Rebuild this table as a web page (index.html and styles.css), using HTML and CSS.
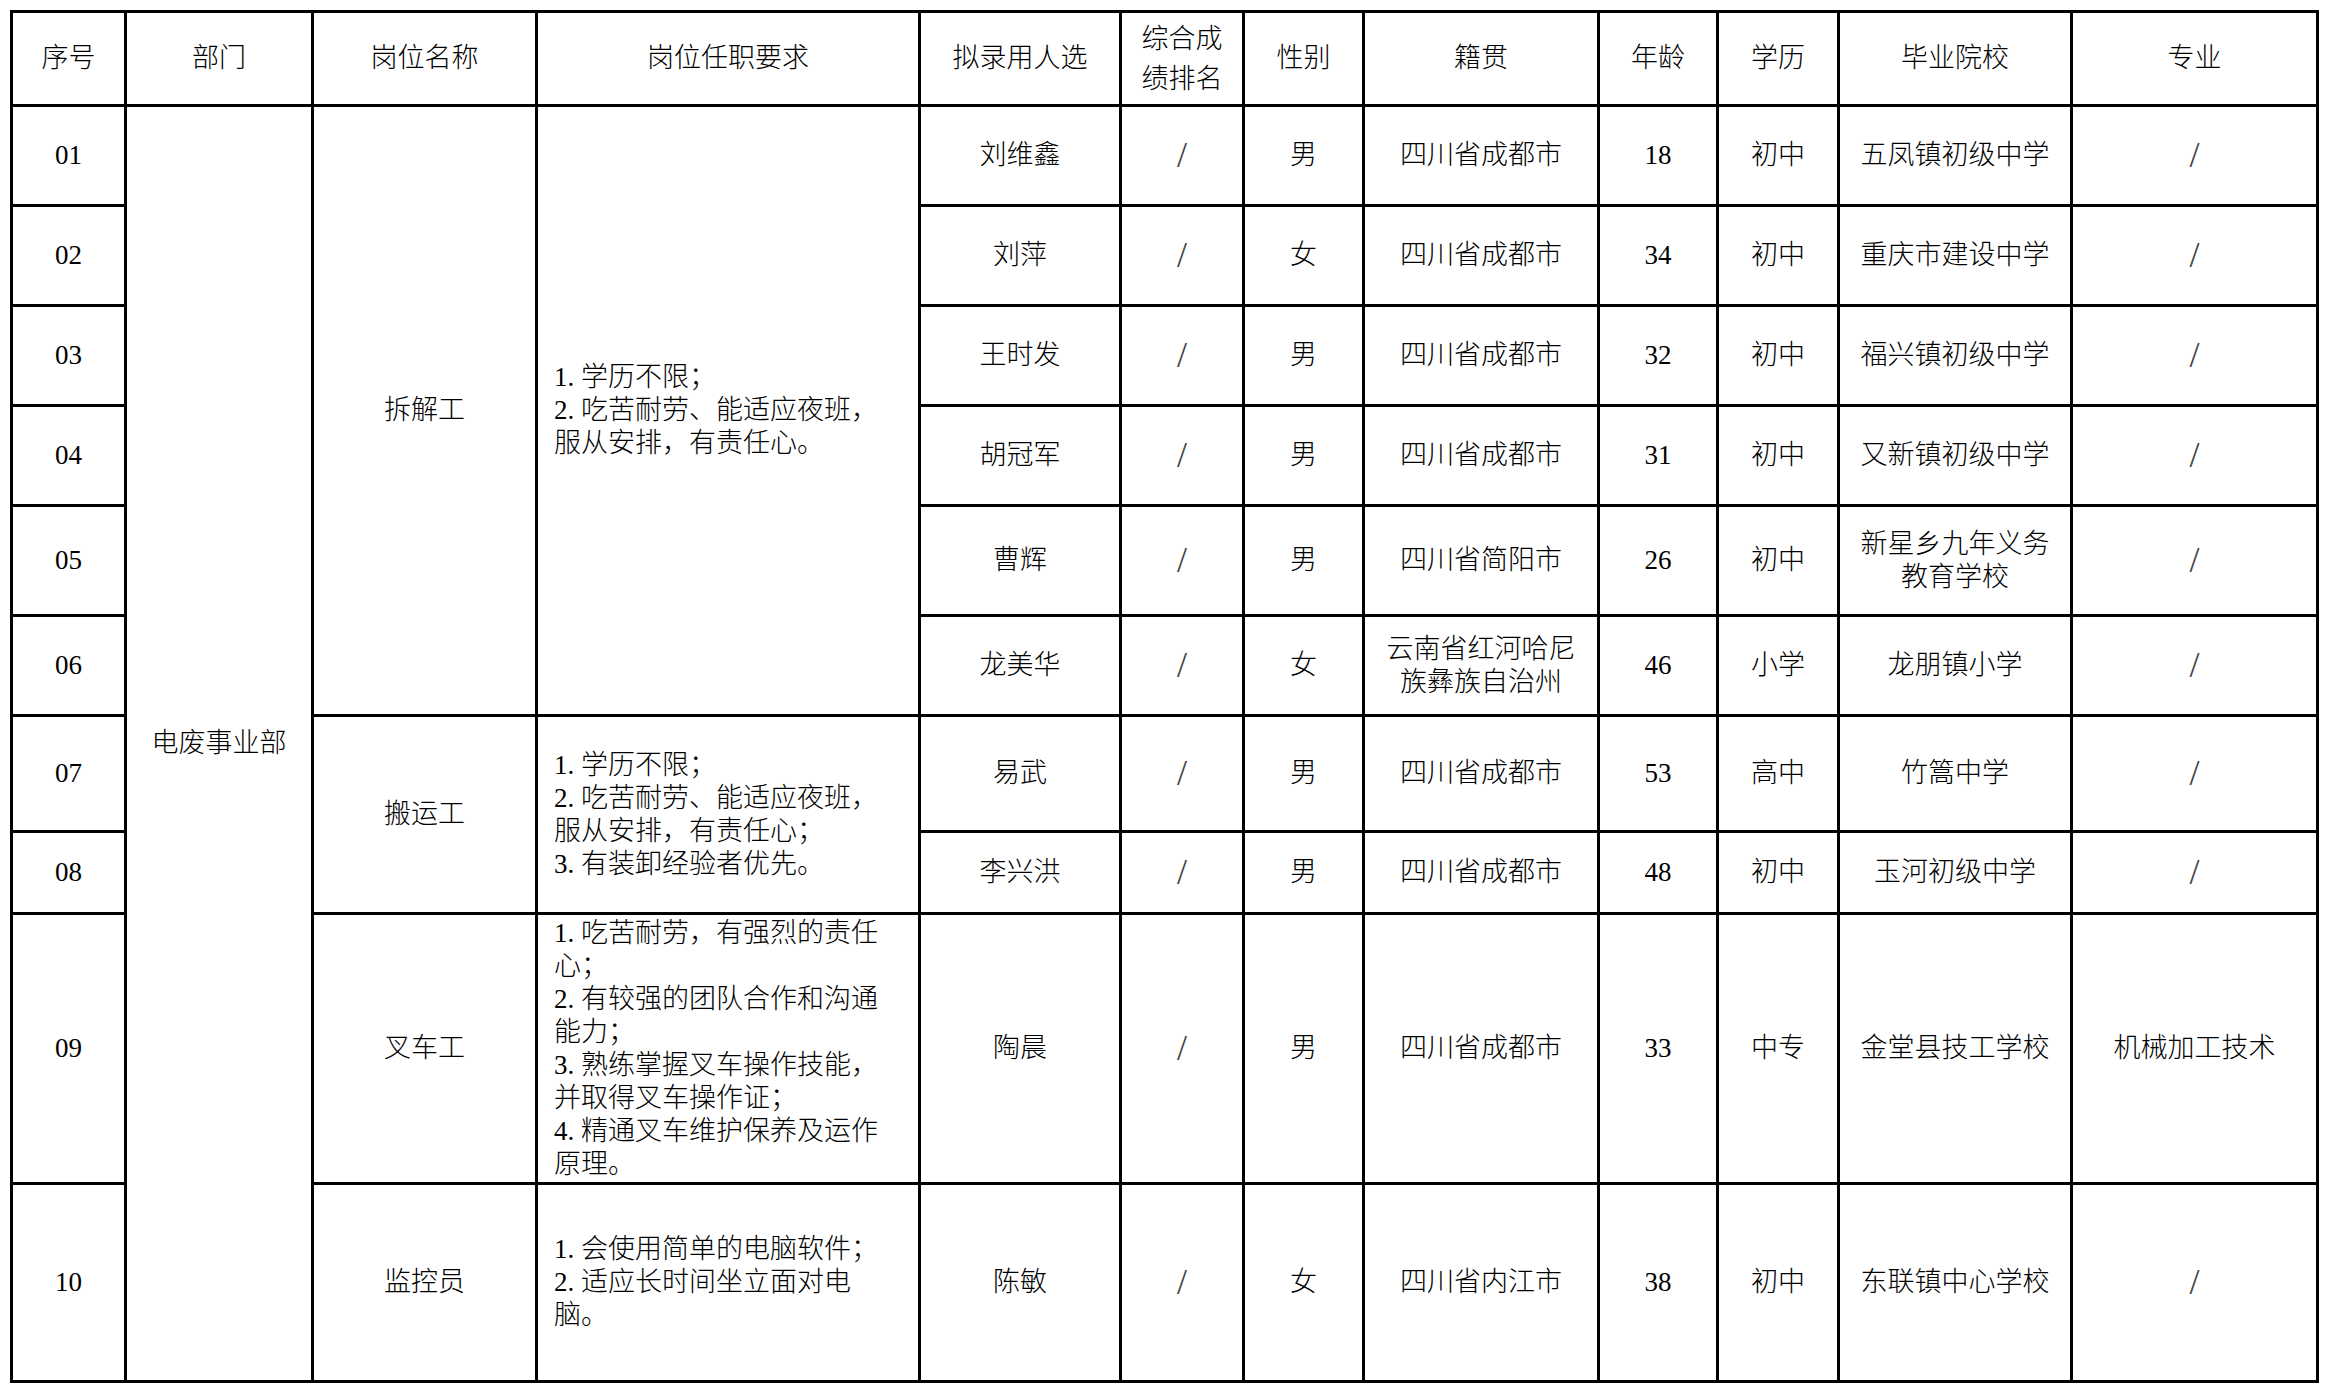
FILE: index.html
```html
<!DOCTYPE html>
<html lang="zh-CN">
<head>
<meta charset="utf-8">
<title>拟录用人选名单</title>
<link rel="stylesheet" href="styles.css">
</head>
<body>
<table class="sheet">
  <colgroup>
    <col class="c-no"><col class="c-dept"><col class="c-post"><col class="c-req"><col class="c-name"><col class="c-rank"><col class="c-sex"><col class="c-home"><col class="c-age"><col class="c-edu"><col class="c-school"><col class="c-major">
  </colgroup>
  <tr class="h-head">
    <td>序号</td><td>部门</td><td>岗位名称</td><td>岗位任职要求</td><td>拟录用人选</td><td class="tall">综合成<br>绩排名</td><td>性别</td><td>籍贯</td><td>年龄</td><td>学历</td><td>毕业院校</td><td>专业</td>
  </tr>
  <tr class="h-100">
    <td>01</td>
    <td rowspan="10">电废事业部</td>
    <td rowspan="6">拆解工</td>
    <td rowspan="6" class="req"><span class="ln">1. 学历不限；</span><span class="ln">2. 吃苦耐劳、能适应夜班，</span><span class="ln">服从安排，有责任心。</span></td>
    <td>刘维鑫</td><td class="sl">/</td><td>男</td><td>四川省成都市</td><td>18</td><td>初中</td><td>五凤镇初级中学</td><td class="sl">/</td>
  </tr>
  <tr class="h-100">
    <td>02</td><td>刘萍</td><td class="sl">/</td><td>女</td><td>四川省成都市</td><td>34</td><td>初中</td><td>重庆市建设中学</td><td class="sl">/</td>
  </tr>
  <tr class="h-100">
    <td>03</td><td>王时发</td><td class="sl">/</td><td>男</td><td>四川省成都市</td><td>32</td><td>初中</td><td>福兴镇初级中学</td><td class="sl">/</td>
  </tr>
  <tr class="h-100">
    <td>04</td><td>胡冠军</td><td class="sl">/</td><td>男</td><td>四川省成都市</td><td>31</td><td>初中</td><td>又新镇初级中学</td><td class="sl">/</td>
  </tr>
  <tr class="h-110">
    <td>05</td><td>曹辉</td><td class="sl">/</td><td>男</td><td>四川省简阳市</td><td>26</td><td>初中</td><td>新星乡九年义务<br>教育学校</td><td class="sl">/</td>
  </tr>
  <tr class="h-100">
    <td>06</td><td>龙美华</td><td class="sl">/</td><td>女</td><td>云南省红河哈尼<br>族彝族自治州</td><td>46</td><td>小学</td><td>龙朋镇小学</td><td class="sl">/</td>
  </tr>
  <tr class="h-116">
    <td>07</td>
    <td rowspan="2">搬运工</td>
    <td rowspan="2" class="req"><span class="ln">1. 学历不限；</span><span class="ln">2. 吃苦耐劳、能适应夜班，</span><span class="ln">服从安排，有责任心；</span><span class="ln">3. 有装卸经验者优先。</span></td>
    <td>易武</td><td class="sl">/</td><td>男</td><td>四川省成都市</td><td>53</td><td>高中</td><td>竹篙中学</td><td class="sl">/</td>
  </tr>
  <tr class="h-82">
    <td>08</td><td>李兴洪</td><td class="sl">/</td><td>男</td><td>四川省成都市</td><td>48</td><td>初中</td><td>玉河初级中学</td><td class="sl">/</td>
  </tr>
  <tr class="h-270">
    <td>09</td>
    <td>叉车工</td>
    <td class="req"><span class="ln">1. 吃苦耐劳，有强烈的责任</span><span class="ln">心；</span><span class="ln">2. 有较强的团队合作和沟通</span><span class="ln">能力；</span><span class="ln">3. 熟练掌握叉车操作技能，</span><span class="ln">并取得叉车操作证；</span><span class="ln">4. 精通叉车维护保养及运作</span><span class="ln">原理。</span></td>
    <td>陶晨</td><td class="sl">/</td><td>男</td><td>四川省成都市</td><td>33</td><td>中专</td><td>金堂县技工学校</td><td>机械加工技术</td>
  </tr>
  <tr class="h-198">
    <td>10</td>
    <td>监控员</td>
    <td class="req"><span class="ln">1. 会使用简单的电脑软件；</span><span class="ln">2. 适应长时间坐立面对电</span><span class="ln">脑。</span></td>
    <td>陈敏</td><td class="sl">/</td><td>女</td><td>四川省内江市</td><td>38</td><td>初中</td><td>东联镇中心学校</td><td class="sl">/</td>
  </tr>
</table>
</body>
</html>
```
FILE: styles.css
```css
html, body {
  margin: 0;
  padding: 0;
  background: #ffffff;
}
body {
  padding: 10px 0 0 10px;
  font-family: "Liberation Serif", "Noto Sans CJK SC", serif;
  font-size: 27px;
  font-weight: 300;
  color: #000000;
}
.sheet {
  border-collapse: collapse;
  table-layout: fixed;
  width: 2309px;
}
.sheet td {
  border: 3px solid #000000;
  text-align: center;
  vertical-align: middle;
  padding: 0 4px;
  line-height: 33px;
  white-space: nowrap;
}
.c-no { width: 114px; }
.c-dept { width: 187px; }
.c-post { width: 224px; }
.c-req { width: 383px; }
.c-name { width: 201px; }
.c-rank { width: 123px; }
.c-sex { width: 120px; }
.c-home { width: 235px; }
.c-age { width: 119px; }
.c-edu { width: 121px; }
.c-school { width: 233px; }
.c-major { width: 246px; }

.h-head { height: 94px; }
.h-100 { height: 100px; }
.h-110 { height: 110px; }
.h-116 { height: 116px; }
.h-82 { height: 82px; }
.h-270 { height: 270px; }
.h-198 { height: 198px; }

.sheet td.tall {
  line-height: 40px;
}
.sheet td.req {
  text-align: left;
  padding: 0 10px 0 16px;
}
.req .ln {
  display: block;
}
.sheet td.sl {
  color: #444444;
  font-size: 36px;
  font-weight: 400;
}
```
